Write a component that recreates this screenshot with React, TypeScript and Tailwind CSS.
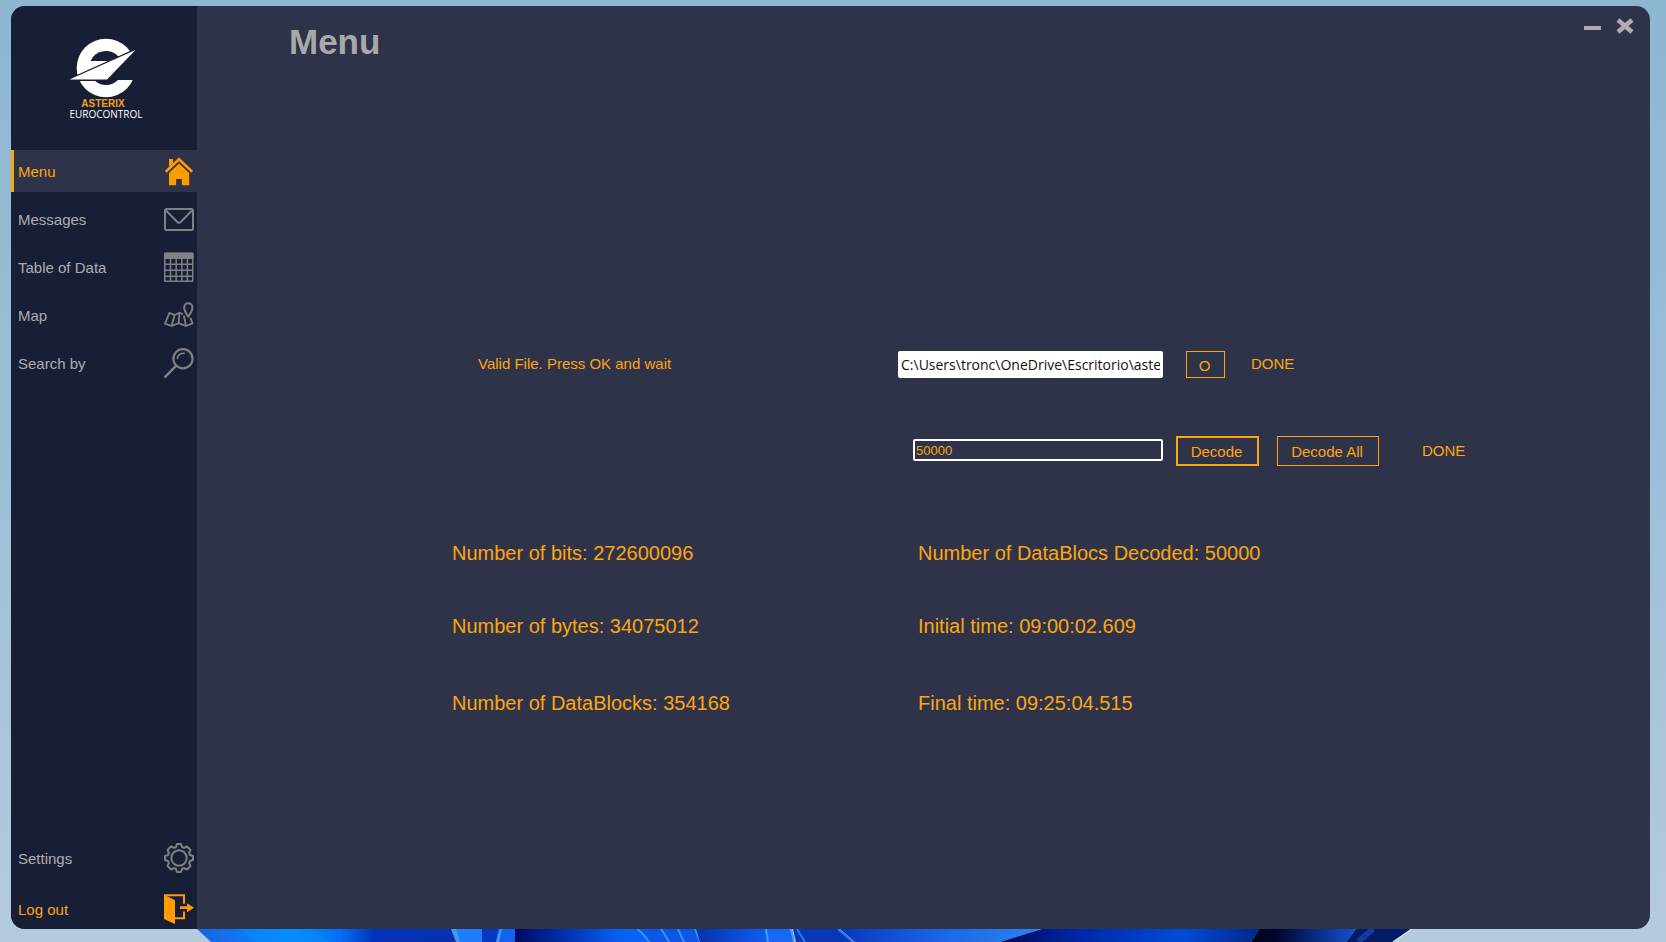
import type { ReactNode } from 'react';

const iconProps = {
  viewBox: '0 0 30 30',
  className: 'h-[30px] w-[30px] shrink-0',
  'aria-hidden': true,
} as const;

function HomeIcon() {
  return (
    <svg {...iconProps} fill="#ff9c00">
      <path d="M5 3h4v4L5 11z" />
      <path d="M1.800 15.800 15 3.400 28.200 15.800" fill="none" stroke="#ff9c00" strokeWidth="2.600" />
      <path d="M15 7.400 25.200 17v12.200h-7.400V23h-5.600v6.200H5V17z" />
    </svg>
  );
}

function MailIcon() {
  return (
    <svg {...iconProps} fill="none" stroke="#808083" strokeWidth="2">
      <rect x="1" y="5" width="28" height="21" rx="1.5" />
      <path d="M2 6.500 13.600 18.200q1.400 1.200 2.800 0L28 6.500" />
    </svg>
  );
}

function TableIcon() {
  return (
    <svg {...iconProps} fill="none" stroke="#808083" strokeWidth="1.5">
      <rect x="0" y="0.500" width="29.500" height="6.500" rx="1" fill="#808083" stroke="none" />
      <rect x="0.750" y="1.500" width="28" height="27.800" rx="0.5" />
      <path d="M6.500 7v22M12.200 7v22M17.800 7v22M23.400 7v22M1 12.300h28M1 18.300h28M1 24.200h28" />
    </svg>
  );
}

function MapIcon() {
  return (
    <svg {...iconProps} fill="none" stroke="#808083" strokeWidth="1.8" strokeLinejoin="round">
      <path d="M19 14.200 15.500 12.800 10.600 15 5.400 12.800 1 23.600 7.600 26 14.600 23.200 22 26 28.600 23.400 26.400 17.800" />
      <path d="M10.600 15 7.600 26M15.500 12.800 14.600 23.200M19.800 15.500 22 26" />
      <path d="M24.300 16.800C22 13 20.200 10.600 20.200 7.400a4.100 4.100 0 0 1 8.200 0C28.400 10.600 26.600 13 24.300 16.800z" strokeWidth="2" />
    </svg>
  );
}

function SearchIcon() {
  return (
    <svg {...iconProps} fill="none" stroke="#808083" strokeWidth="2.2" strokeLinecap="round">
      <circle cx="19" cy="10.800" r="9.600" />
      <path d="M12 17.800 1.200 28.800" strokeWidth="2.500" />
      <path d="M13.400 10.200a6 6 0 0 1 6.600-4.800" strokeWidth="1.800" />
    </svg>
  );
}

function GearIcon() {
  return (
    <svg {...iconProps} fill="none" stroke="#808083" strokeWidth="2" strokeLinejoin="round">
      <path d="M12 4 13 1h4l1 3 2.100.900L23 3.500 26.500 7l-1.400 2.900L26 12l3 1v4l-3 1-.900 2.100L26.500 23 23 26.500l-2.900-1.400L18 26l-1 3h-4l-1-3-2.100-.900L7 26.500 3.500 23l1.400-2.900L4 18l-3-1v-4l3-1 .900-2.100L3.500 7 7 3.500l2.900 1.400z" />
      <circle cx="15" cy="15" r="7.700" />
    </svg>
  );
}

function LogoutIcon() {
  return (
    <svg {...iconProps} fill="#ff9c00">
      <path d="M0 0.500 11 6.200V30L0 25z" />
      <path d="M0 1.200h20v8.600M20 17.500v6.800h-9.500" fill="none" stroke="#ff9c00" strokeWidth="2" />
      <path d="M16 12.300h7V9.200l7 4.500-7 4.500v-3.100h-7z" />
    </svg>
  );
}

function Logo() {
  return (
    <div className="flex h-36 flex-col items-center justify-center pt-px pr-0.5">
      <svg viewBox="68 38 68 60" className="h-[60px] w-[68px]" aria-hidden="true">
        <circle cx="105" cy="68" r="29.300" fill="#fff" />
        <g fill="#191e37">
          <path d="M89.500 61A17 17 0 0 1 118 57L107 61z" />
          <path d="M107 79 134 49 138 80H117A17 17 0 0 1 93 80z" />
        </g>
        <path d="M68.500 79.600 134.500 50 106 79.600z" fill="none" stroke="#191e37" strokeWidth="2.600" />
        <path d="M68.500 79.600 134.500 50 106 79.600z" fill="#fff" />
      </svg>
      <div className="flex flex-col items-center">
        <span className="text-[10px] leading-[12px] font-bold text-[#f5a01c]">ASTERIX</span>
        <span className="pl-1.5 font-['Open_Sans',sans-serif] text-[10px] leading-[9px] font-medium text-white">EUROCONTROL</span>
      </div>
    </div>
  );
}

function NavButton({ label, icon, active = false, accent = false }: { label: string; icon: ReactNode; active?: boolean; accent?: boolean }) {
  return (
    <button
      type="button"
      aria-current={active ? 'page' : undefined}
      className={`flex w-full items-center justify-between border-l-[3px] pr-[3px] pl-1 text-[15px] leading-5 ${
        active ? 'h-[42px] border-[#fca60f] bg-[#2f3349] text-[#fca60f]' : accent ? 'h-10 border-transparent text-[#fca60f]' : 'h-[42px] border-transparent text-[#adadb0]'
      }`}
    >
      <span className="pt-0.5">{label}</span>
      {icon}
    </button>
  );
}

function Wallpaper() {
  return (
    <svg viewBox="0 0 1666 13" preserveAspectRatio="none" className="block h-[13px] w-full" aria-hidden="true">
      <defs>
        <linearGradient id="w1"><stop stopColor="#1766e0" /><stop offset=".2" stopColor="#0f78f5" /><stop offset=".35" stopColor="#078cff" /><stop offset=".55" stopColor="#0270f5" /><stop offset=".68" stopColor="#0034b8" /><stop offset="1" stopColor="#052fb0" /></linearGradient>
        <linearGradient id="w2"><stop stopColor="#020765" /><stop offset=".4" stopColor="#0334b4" /><stop offset=".75" stopColor="#0560ef" /><stop offset="1" stopColor="#0966f5" /></linearGradient>
        <linearGradient id="w3"><stop stopColor="#0532ad" /><stop offset="1" stopColor="#0f60ee" /></linearGradient>
        <linearGradient id="w4"><stop stopColor="#0737bd" /><stop offset=".5" stopColor="#1a67e5" /><stop offset="1" stopColor="#2c82ef" /></linearGradient>
        <linearGradient id="w5"><stop stopColor="#020a60" /><stop offset=".3" stopColor="#0026a6" /><stop offset=".7" stopColor="#004cd8" /><stop offset="1" stopColor="#02278b" /></linearGradient>
        <linearGradient id="w6"><stop stopColor="#01031c" /><stop offset=".25" stopColor="#020630" /><stop offset="1" stopColor="#1451d2" /></linearGradient>
      </defs>
      <path d="M197 0h260v13H211z" fill="url(#w1)" />
      <path d="M241 0h70l20 13H256z" fill="#078dff" opacity=".5" />
      <path d="M451 0h32v13h-25z" fill="#1e7df8" />
      <path d="M451 0h5l4 13h-4z" fill="#4c96ef" />
      <path d="M482 0h17l-2 13h-15z" fill="#0639bd" />
      <path d="M498 0h18v13h-20z" fill="#1163ec" />
      <path d="M500 0h2l-3 13h-3z" fill="#4c96f5" />
      <path d="M515 0h123l12 13H515z" fill="url(#w2)" />
      <path d="M638 0h57l5 13h-52q-3-8-10-13z" fill="#0b58e5" />
      <path d="M637 0q8 6 12 13M661 0q5 7 8 13M678 0l6 13M695 0l5 13" fill="none" stroke="#3b91fa" strokeWidth="2" />
      <path d="M696 0h70l2 13h-68z" fill="url(#w3)" />
      <path d="M766 0h24l4 13h-26z" fill="#1469f5" />
      <path d="M766 0l2 13M791 0l3 13" stroke="#439aff" strokeWidth="2" />
      <path d="M793 0h46l15 13h-58z" fill="#0739b6" />
      <path d="M797 0l8 13M838 0l15 13" stroke="#297ced" strokeWidth="2" />
      <path d="M840 0h202l-42 13H855z" fill="url(#w4)" />
      <path d="M1042 0h217l-8 13h-251z" fill="url(#w5)" />
      <path d="M1259 0h97l-10 13h-95z" fill="url(#w6)" />
      <path d="M1356 0h56l-19 13h-47z" fill="#061b66" />
      <path d="M1373 0l-15 13" stroke="#133aa0" strokeWidth="6" />
      <path d="M1412 0l-19 13" stroke="#dce8f3" strokeWidth="1.500" />
    </svg>
  );
}

const leftStats = ['Number of bits: 272600096', 'Number of bytes: 34075012', 'Number of DataBlocks: 354168'];
const rightStats = ['Number of DataBlocs Decoded: 50000', 'Initial time: 09:00:02.609', 'Final time: 09:25:04.515'];

function StatList({ items }: { items: string[] }) {
  return (
    <ul className="grid grid-rows-[73px_77px_24px]">
      {items.map((text) => (
        <li key={text}>{text}</li>
      ))}
    </ul>
  );
}

export default function App() {
  return (
    <div className="flex min-h-screen flex-col bg-[linear-gradient(to_bottom,#8db7d1_0%,#9cbfd7_50%,#b6cade_100%)] pt-1.5 font-['Liberation_Sans',Arial,sans-serif]">
      <div className="mr-4 ml-[11px] flex flex-1 overflow-hidden rounded-[14px] bg-[#2f3349]">
        <aside className="flex w-[186px] shrink-0 flex-col bg-[#191e37]">
          <Logo />
          <nav className="flex flex-1 flex-col justify-between" aria-label="Main">
            <div className="flex flex-col gap-1.5">
              <NavButton label="Menu" icon={<HomeIcon />} active />
              <NavButton label="Messages" icon={<MailIcon />} />
              <NavButton label="Table of Data" icon={<TableIcon />} />
              <NavButton label="Map" icon={<MapIcon />} />
              <NavButton label="Search by" icon={<SearchIcon />} />
            </div>
            <div className="flex flex-col gap-2.5">
              <NavButton label="Settings" icon={<GearIcon />} />
              <NavButton label="Log out" icon={<LogoutIcon />} accent />
            </div>
          </nav>
        </aside>

        <main className="flex min-w-0 flex-1 flex-col text-[15px] leading-5 text-[#fca60f]">
          <header className="flex items-start justify-between pt-4 pr-4 pl-[92px]">
            <h1 className="text-[35px] leading-10 font-bold text-[#a9a9a9]">Menu</h1>
            <div className="-mt-1 flex items-center gap-[15px]">
              <button type="button" aria-label="Minimize" className="flex h-4 w-[17px] items-center pt-1">
                <span className="h-1 w-full bg-[#b1abae]" />
              </button>
              <button type="button" aria-label="Close" className="h-4 w-[18px]">
                <svg viewBox="0 0 18 16" className="h-4 w-[18px]" aria-hidden="true">
                  <path d="M2 2 16 14M16 2 2 14" stroke="#b1abae" strokeWidth="4.600" />
                </svg>
              </button>
            </div>
          </header>

          <form className="mt-[289px] flex flex-col gap-[58px]" onSubmit={(e) => e.preventDefault()}>
            <div className="grid grid-cols-[966fr_487fr] items-center">
              <div className="flex items-center justify-between pl-[281px]">
                <label htmlFor="file-path" className="pb-0.5">Valid File. Press OK and wait</label>
                <input
                  id="file-path"
                  type="text"
                  defaultValue="C:\Users\tronc\OneDrive\Escritorio\aste"
                  className="h-[27px] w-[265px] rounded-[2px] bg-white px-[3px] font-['Open_Sans',sans-serif] text-[14px] text-[#111]"
                />
              </div>
              <div className="flex items-center pl-[23px]">
                <button type="button" className="h-[27px] w-[39px] border border-[#fca60f] pt-0.5 pr-0.5">O</button>
                <output className="ml-[26px] pb-0.5">DONE</output>
              </div>
            </div>
            <div className="grid grid-cols-[966fr_487fr] items-center">
              <div className="flex justify-end pb-0.5">
                <input
                  type="text"
                  aria-label="Number of blocks to decode"
                  defaultValue="50000"
                  className="h-[22px] w-[250px] rounded-[2px] border-2 border-white bg-transparent px-px text-[13px]"
                />
              </div>
              <div className="flex items-center pl-[13px]">
                <button type="button" className="h-[30px] w-[83px] border-2 border-[#fca60f] pt-0.5 pr-0.5">Decode</button>
                <button type="button" className="ml-[18px] h-[30px] w-[102px] border border-[#fca60f] pt-0.5 pr-0.5">Decode All</button>
                <output className="ml-[43px]">DONE</output>
              </div>
            </div>
          </form>

          <section className="mt-[75px] grid grid-cols-[466fr_732fr] pl-[255px] text-[20px] leading-6">
            <StatList items={leftStats} />
            <StatList items={rightStats} />
          </section>
        </main>
      </div>
      <Wallpaper />
    </div>
  );
}
